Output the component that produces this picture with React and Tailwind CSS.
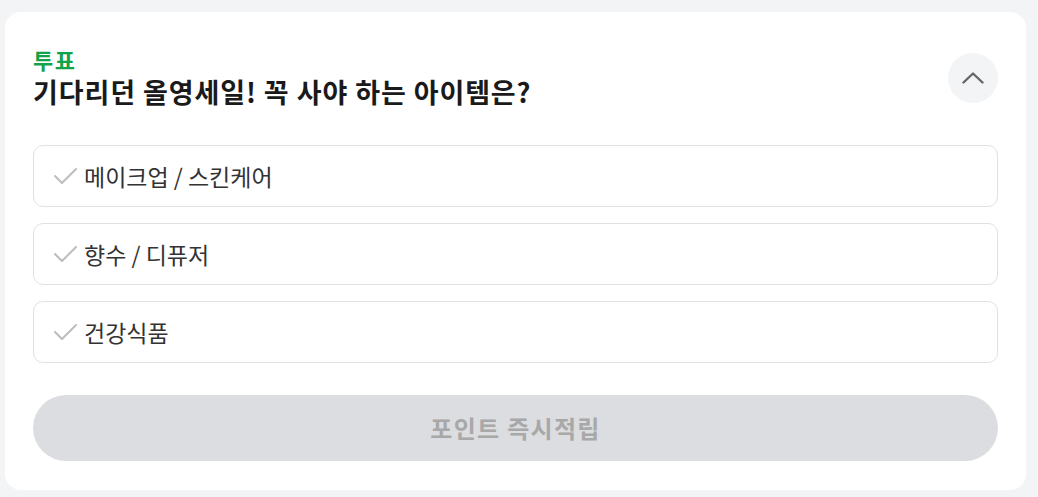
const options = ['메이크업 / 스킨케어', '향수 / 디퓨저', '건강식품'];

function CheckMark() {
    return (
        <svg width="23" height="16" viewBox="0 0 23 16" fill="none" className="text-[#bdbdbd] shrink-0">
            <path d="M1 8L8 15L22 1" stroke="currentColor" strokeWidth="2" strokeLinecap="round" strokeLinejoin="round" />
        </svg>
    );
}

export default function App() {
    return (
        <div className="min-h-screen bg-[#f3f4f6] pl-[5px] pr-[12px] pt-[12px] pb-[7px]" style={{ fontFamily: '"Noto Sans CJK KR", "Noto Sans", sans-serif' }}>
            <div className="bg-white rounded-[16px] px-[28px] pt-[32px] pb-[29px]">

                {/* Header */}
                <div className="flex items-start justify-between">
                    <div>
                        <div className="text-[22px] leading-[30px] font-bold text-[#12a24a] tracking-[1.5px]">투표</div>
                        <h1 className="text-[27px] leading-[36px] font-bold text-[#1a1a1a] tracking-[0.9px]">
                            기다리던 올영세일! 꼭 사야 하는 아이템은?
                        </h1>
                    </div>
                    <button className="mt-[9px] w-[50px] h-[50px] rounded-full bg-[#f3f4f6] flex items-center justify-center">
                        <svg width="22" height="12" viewBox="0 0 22 12" fill="none" className="text-[#666]">
                            <path d="M1.5 10.5L11 1.5L20.5 10.5" stroke="currentColor" strokeWidth="2.4" strokeLinecap="round" strokeLinejoin="round" />
                        </svg>
                    </button>
                </div>

                {/* Options */}
                <div className="mt-[35px] flex flex-col gap-[16px]">
                    {options.map((o) => (
                        <div key={o} className="h-[62px] border border-[#e1e1e1] rounded-[10px] flex items-center pl-[20px]">
                            <CheckMark />
                            <span className="ml-[7px] text-[23px] text-[#333]">{o}</span>
                        </div>
                    ))}
                </div>

                {/* Submit */}
                <button className="mt-[32px] w-full h-[66px] rounded-full bg-[#dcdde0] text-[24px] font-bold text-[#a8a8a8] tracking-[1.3px]">
                    포인트 즉시적립
                </button>
            </div>
        </div>
    );
}
